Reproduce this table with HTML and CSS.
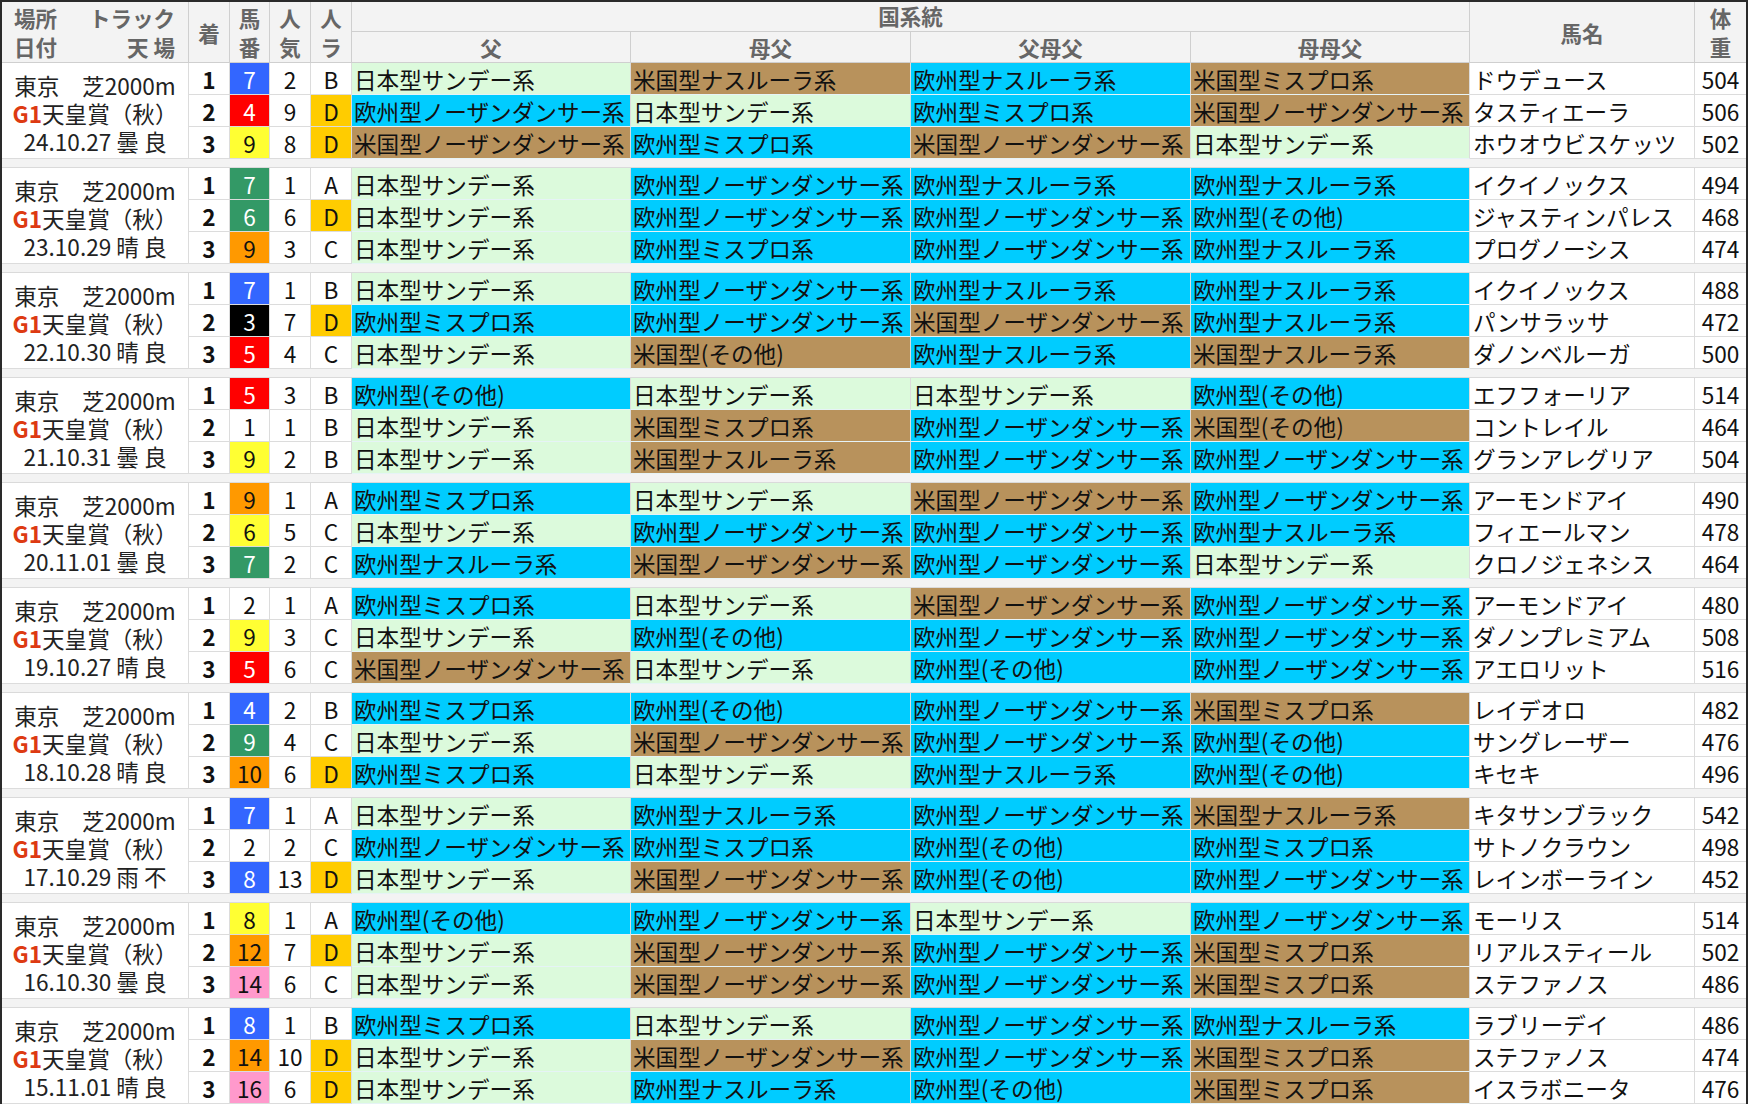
FILE: index.html
```html
<!DOCTYPE html>
<html lang="ja">
<head>
<meta charset="utf-8">
<title>天皇賞（秋） 国系統</title>
<link rel="stylesheet" href="styles.css">
</head>
<body>
<div class="tbl">
  <div class="head">
    <div class="h h-place"><div class="hl"><span>場所</span><span>トラック</span></div><div class="hl"><span>日付</span><span>天 場</span></div></div>
    <div class="h h-rk">着</div>
    <div class="h h-v h-no">馬<br>番</div>
    <div class="h h-v h-pop">人<br>気</div>
    <div class="h h-v h-rank">人<br>ラ</div>
    <div class="h h-kk">国系統</div>
    <div class="h h-sub h-s1">父</div>
    <div class="h h-sub h-s2">母父</div>
    <div class="h h-sub h-s3">父母父</div>
    <div class="h h-sub h-s4">母母父</div>
    <div class="h h-nm">馬名</div>
    <div class="h h-v h-wt">体<br>重</div>
  </div>

  <div class="grp">
    <div class="place"><div>東京　芝2000m</div><div><b class="g1">G1</b>天皇賞（秋）</div><div>24.10.27 曇 良</div></div>
    <div class="c rk">1</div><div class="c f4">7</div><div class="c">2</div><div class="c">B</div><div class="c p j">日本型サンデー系</div><div class="c p a">米国型ナスルーラ系</div><div class="c p e">欧州型ナスルーラ系</div><div class="c p a">米国型ミスプロ系</div><div class="c nm">ドウデュース</div><div class="c wt">504</div>
    <div class="c rk">2</div><div class="c f3">4</div><div class="c">9</div><div class="c d">D</div><div class="c p e">欧州型ノーザンダンサー系</div><div class="c p j">日本型サンデー系</div><div class="c p e">欧州型ミスプロ系</div><div class="c p a">米国型ノーザンダンサー系</div><div class="c nm">タスティエーラ</div><div class="c wt">506</div>
    <div class="c rk">3</div><div class="c f5">9</div><div class="c">8</div><div class="c d">D</div><div class="c p a">米国型ノーザンダンサー系</div><div class="c p e">欧州型ミスプロ系</div><div class="c p a">米国型ノーザンダンサー系</div><div class="c p j">日本型サンデー系</div><div class="c nm">ホウオウビスケッツ</div><div class="c wt">502</div>
  </div>
  <div class="sep"></div>

  <div class="grp">
    <div class="place"><div>東京　芝2000m</div><div><b class="g1">G1</b>天皇賞（秋）</div><div>23.10.29 晴 良</div></div>
    <div class="c rk">1</div><div class="c f6">7</div><div class="c">1</div><div class="c">A</div><div class="c p j">日本型サンデー系</div><div class="c p e">欧州型ノーザンダンサー系</div><div class="c p e">欧州型ナスルーラ系</div><div class="c p e">欧州型ナスルーラ系</div><div class="c nm">イクイノックス</div><div class="c wt">494</div>
    <div class="c rk">2</div><div class="c f6">6</div><div class="c">6</div><div class="c d">D</div><div class="c p j">日本型サンデー系</div><div class="c p e">欧州型ノーザンダンサー系</div><div class="c p e">欧州型ノーザンダンサー系</div><div class="c p e">欧州型(その他)</div><div class="c nm">ジャスティンパレス</div><div class="c wt">468</div>
    <div class="c rk">3</div><div class="c f7">9</div><div class="c">3</div><div class="c">C</div><div class="c p j">日本型サンデー系</div><div class="c p e">欧州型ミスプロ系</div><div class="c p e">欧州型ノーザンダンサー系</div><div class="c p e">欧州型ナスルーラ系</div><div class="c nm">プログノーシス</div><div class="c wt">474</div>
  </div>
  <div class="sep"></div>

  <div class="grp">
    <div class="place"><div>東京　芝2000m</div><div><b class="g1">G1</b>天皇賞（秋）</div><div>22.10.30 晴 良</div></div>
    <div class="c rk">1</div><div class="c f4">7</div><div class="c">1</div><div class="c">B</div><div class="c p j">日本型サンデー系</div><div class="c p e">欧州型ノーザンダンサー系</div><div class="c p e">欧州型ナスルーラ系</div><div class="c p e">欧州型ナスルーラ系</div><div class="c nm">イクイノックス</div><div class="c wt">488</div>
    <div class="c rk">2</div><div class="c f2">3</div><div class="c">7</div><div class="c d">D</div><div class="c p e">欧州型ミスプロ系</div><div class="c p e">欧州型ノーザンダンサー系</div><div class="c p a">米国型ノーザンダンサー系</div><div class="c p e">欧州型ナスルーラ系</div><div class="c nm">パンサラッサ</div><div class="c wt">472</div>
    <div class="c rk">3</div><div class="c f3">5</div><div class="c">4</div><div class="c">C</div><div class="c p j">日本型サンデー系</div><div class="c p a">米国型(その他)</div><div class="c p e">欧州型ナスルーラ系</div><div class="c p a">米国型ナスルーラ系</div><div class="c nm">ダノンベルーガ</div><div class="c wt">500</div>
  </div>
  <div class="sep"></div>

  <div class="grp">
    <div class="place"><div>東京　芝2000m</div><div><b class="g1">G1</b>天皇賞（秋）</div><div>21.10.31 曇 良</div></div>
    <div class="c rk">1</div><div class="c f3">5</div><div class="c">3</div><div class="c">B</div><div class="c p e">欧州型(その他)</div><div class="c p j">日本型サンデー系</div><div class="c p j">日本型サンデー系</div><div class="c p e">欧州型(その他)</div><div class="c nm">エフフォーリア</div><div class="c wt">514</div>
    <div class="c rk">2</div><div class="c f1">1</div><div class="c">1</div><div class="c">B</div><div class="c p j">日本型サンデー系</div><div class="c p a">米国型ミスプロ系</div><div class="c p e">欧州型ノーザンダンサー系</div><div class="c p a">米国型(その他)</div><div class="c nm">コントレイル</div><div class="c wt">464</div>
    <div class="c rk">3</div><div class="c f5">9</div><div class="c">2</div><div class="c">B</div><div class="c p j">日本型サンデー系</div><div class="c p a">米国型ナスルーラ系</div><div class="c p e">欧州型ノーザンダンサー系</div><div class="c p e">欧州型ノーザンダンサー系</div><div class="c nm">グランアレグリア</div><div class="c wt">504</div>
  </div>
  <div class="sep"></div>

  <div class="grp">
    <div class="place"><div>東京　芝2000m</div><div><b class="g1">G1</b>天皇賞（秋）</div><div>20.11.01 曇 良</div></div>
    <div class="c rk">1</div><div class="c f7">9</div><div class="c">1</div><div class="c">A</div><div class="c p e">欧州型ミスプロ系</div><div class="c p j">日本型サンデー系</div><div class="c p a">米国型ノーザンダンサー系</div><div class="c p e">欧州型ノーザンダンサー系</div><div class="c nm">アーモンドアイ</div><div class="c wt">490</div>
    <div class="c rk">2</div><div class="c f5">6</div><div class="c">5</div><div class="c">C</div><div class="c p j">日本型サンデー系</div><div class="c p e">欧州型ノーザンダンサー系</div><div class="c p e">欧州型ノーザンダンサー系</div><div class="c p e">欧州型ナスルーラ系</div><div class="c nm">フィエールマン</div><div class="c wt">478</div>
    <div class="c rk">3</div><div class="c f6">7</div><div class="c">2</div><div class="c">C</div><div class="c p e">欧州型ナスルーラ系</div><div class="c p a">米国型ノーザンダンサー系</div><div class="c p e">欧州型ノーザンダンサー系</div><div class="c p j">日本型サンデー系</div><div class="c nm">クロノジェネシス</div><div class="c wt">464</div>
  </div>
  <div class="sep"></div>

  <div class="grp">
    <div class="place"><div>東京　芝2000m</div><div><b class="g1">G1</b>天皇賞（秋）</div><div>19.10.27 晴 良</div></div>
    <div class="c rk">1</div><div class="c f1">2</div><div class="c">1</div><div class="c">A</div><div class="c p e">欧州型ミスプロ系</div><div class="c p j">日本型サンデー系</div><div class="c p a">米国型ノーザンダンサー系</div><div class="c p e">欧州型ノーザンダンサー系</div><div class="c nm">アーモンドアイ</div><div class="c wt">480</div>
    <div class="c rk">2</div><div class="c f5">9</div><div class="c">3</div><div class="c">C</div><div class="c p j">日本型サンデー系</div><div class="c p e">欧州型(その他)</div><div class="c p e">欧州型ノーザンダンサー系</div><div class="c p e">欧州型ノーザンダンサー系</div><div class="c nm">ダノンプレミアム</div><div class="c wt">508</div>
    <div class="c rk">3</div><div class="c f3">5</div><div class="c">6</div><div class="c">C</div><div class="c p a">米国型ノーザンダンサー系</div><div class="c p j">日本型サンデー系</div><div class="c p e">欧州型(その他)</div><div class="c p e">欧州型ノーザンダンサー系</div><div class="c nm">アエロリット</div><div class="c wt">516</div>
  </div>
  <div class="sep"></div>

  <div class="grp">
    <div class="place"><div>東京　芝2000m</div><div><b class="g1">G1</b>天皇賞（秋）</div><div>18.10.28 晴 良</div></div>
    <div class="c rk">1</div><div class="c f4">4</div><div class="c">2</div><div class="c">B</div><div class="c p e">欧州型ミスプロ系</div><div class="c p e">欧州型(その他)</div><div class="c p e">欧州型ノーザンダンサー系</div><div class="c p a">米国型ミスプロ系</div><div class="c nm">レイデオロ</div><div class="c wt">482</div>
    <div class="c rk">2</div><div class="c f6">9</div><div class="c">4</div><div class="c">C</div><div class="c p j">日本型サンデー系</div><div class="c p a">米国型ノーザンダンサー系</div><div class="c p e">欧州型ノーザンダンサー系</div><div class="c p e">欧州型(その他)</div><div class="c nm">サングレーザー</div><div class="c wt">476</div>
    <div class="c rk">3</div><div class="c f7">10</div><div class="c">6</div><div class="c d">D</div><div class="c p e">欧州型ミスプロ系</div><div class="c p j">日本型サンデー系</div><div class="c p e">欧州型ナスルーラ系</div><div class="c p e">欧州型(その他)</div><div class="c nm">キセキ</div><div class="c wt">496</div>
  </div>
  <div class="sep"></div>

  <div class="grp">
    <div class="place"><div>東京　芝2000m</div><div><b class="g1">G1</b>天皇賞（秋）</div><div>17.10.29 雨 不</div></div>
    <div class="c rk">1</div><div class="c f4">7</div><div class="c">1</div><div class="c">A</div><div class="c p j">日本型サンデー系</div><div class="c p e">欧州型ナスルーラ系</div><div class="c p e">欧州型ノーザンダンサー系</div><div class="c p a">米国型ナスルーラ系</div><div class="c nm">キタサンブラック</div><div class="c wt">542</div>
    <div class="c rk">2</div><div class="c f1">2</div><div class="c">2</div><div class="c">C</div><div class="c p e">欧州型ノーザンダンサー系</div><div class="c p e">欧州型ミスプロ系</div><div class="c p e">欧州型(その他)</div><div class="c p e">欧州型ミスプロ系</div><div class="c nm">サトノクラウン</div><div class="c wt">498</div>
    <div class="c rk">3</div><div class="c f4">8</div><div class="c">13</div><div class="c d">D</div><div class="c p j">日本型サンデー系</div><div class="c p a">米国型ノーザンダンサー系</div><div class="c p e">欧州型(その他)</div><div class="c p e">欧州型ノーザンダンサー系</div><div class="c nm">レインボーライン</div><div class="c wt">452</div>
  </div>
  <div class="sep"></div>

  <div class="grp">
    <div class="place"><div>東京　芝2000m</div><div><b class="g1">G1</b>天皇賞（秋）</div><div>16.10.30 曇 良</div></div>
    <div class="c rk">1</div><div class="c f5">8</div><div class="c">1</div><div class="c">A</div><div class="c p e">欧州型(その他)</div><div class="c p e">欧州型ノーザンダンサー系</div><div class="c p j">日本型サンデー系</div><div class="c p e">欧州型ノーザンダンサー系</div><div class="c nm">モーリス</div><div class="c wt">514</div>
    <div class="c rk">2</div><div class="c f7">12</div><div class="c">7</div><div class="c d">D</div><div class="c p j">日本型サンデー系</div><div class="c p a">米国型ノーザンダンサー系</div><div class="c p e">欧州型ノーザンダンサー系</div><div class="c p a">米国型ミスプロ系</div><div class="c nm">リアルスティール</div><div class="c wt">502</div>
    <div class="c rk">3</div><div class="c f8">14</div><div class="c">6</div><div class="c">C</div><div class="c p j">日本型サンデー系</div><div class="c p a">米国型ノーザンダンサー系</div><div class="c p e">欧州型ノーザンダンサー系</div><div class="c p a">米国型ミスプロ系</div><div class="c nm">ステファノス</div><div class="c wt">486</div>
  </div>
  <div class="sep"></div>

  <div class="grp">
    <div class="place"><div>東京　芝2000m</div><div><b class="g1">G1</b>天皇賞（秋）</div><div>15.11.01 晴 良</div></div>
    <div class="c rk">1</div><div class="c f4">8</div><div class="c">1</div><div class="c">B</div><div class="c p e">欧州型ミスプロ系</div><div class="c p j">日本型サンデー系</div><div class="c p e">欧州型ノーザンダンサー系</div><div class="c p e">欧州型ナスルーラ系</div><div class="c nm">ラブリーデイ</div><div class="c wt">486</div>
    <div class="c rk">2</div><div class="c f7">14</div><div class="c">10</div><div class="c d">D</div><div class="c p j">日本型サンデー系</div><div class="c p a">米国型ノーザンダンサー系</div><div class="c p e">欧州型ノーザンダンサー系</div><div class="c p a">米国型ミスプロ系</div><div class="c nm">ステファノス</div><div class="c wt">474</div>
    <div class="c rk">3</div><div class="c f8">16</div><div class="c">6</div><div class="c d">D</div><div class="c p j">日本型サンデー系</div><div class="c p e">欧州型ナスルーラ系</div><div class="c p e">欧州型(その他)</div><div class="c p a">米国型ミスプロ系</div><div class="c nm">イスラボニータ</div><div class="c wt">476</div>
  </div>
</div>
</body>
</html>
```

FILE: styles.css
```css
html, body {
  margin: 0;
  padding: 0;
  overflow: hidden;
  background: #ffffff;
}

.tbl {
  width: 1748px;
  box-sizing: border-box;
  border: 2px solid #2a2a2a;
  border-bottom-width: 1px;
  font-family: "Noto Sans CJK JP", "Noto Sans", sans-serif;
  font-size: 22.6px;
  color: #111;
  background: #fff;
}

.head,
.grp {
  display: grid;
  grid-template-columns: 187px 41px 40px 41px 41px 279px 280px 280px 279px 225px 51px;
}

.head {
  grid-template-rows: 30px 31px;
  background: #f3f3f3;
}

.h {
  box-sizing: border-box;
  border-right: 1px solid #cfcfcf;
  border-bottom: 1px solid #cfcfcf;
  color: #666;
  font-weight: bold;
  font-size: 21.5px;
  display: flex;
  flex-direction: column;
  align-items: center;
  justify-content: center;
  text-align: center;
  line-height: 29px;
  white-space: nowrap;
}

.h-place {
  grid-column: 1;
  grid-row: 1 / 3;
  align-items: stretch;
  padding: 0 13px 0 12px;
}

.hl {
  display: flex;
  justify-content: space-between;
}

.h-rk { grid-column: 2; grid-row: 1 / 3; }
.h-no { grid-column: 3; grid-row: 1 / 3; }
.h-pop { grid-column: 4; grid-row: 1 / 3; }
.h-rank { grid-column: 5; grid-row: 1 / 3; }

.h-kk {
  grid-column: 6 / 10;
  grid-row: 1;
  padding-bottom: 2px;
}

.h-s1 { grid-column: 6; grid-row: 2; }
.h-s2 { grid-column: 7; grid-row: 2; }
.h-s3 { grid-column: 8; grid-row: 2; }
.h-s4 { grid-column: 9; grid-row: 2; }

.h-nm { grid-column: 10; grid-row: 1 / 3; }

.h-wt {
  grid-column: 11;
  grid-row: 1 / 3;
  border-right: none;
}

.grp {
  grid-template-rows: 32px 32px 32px;
}

.place {
  grid-row: span 3;
  box-sizing: border-box;
  border-right: 1px solid #dcdcdc;
  border-bottom: 1px solid #dcdcdc;
  display: flex;
  flex-direction: column;
  justify-content: center;
  align-items: center;
  line-height: 28px;
  padding-top: 6px;
  color: #222;
  white-space: nowrap;
}

.g1 {
  color: #dd3a12;
  font-weight: bold;
}

.c {
  box-sizing: border-box;
  border-right: 1px solid #dcdcdc;
  border-bottom: 1px solid #dcdcdc;
  display: flex;
  align-items: center;
  justify-content: center;
  line-height: 28px;
  padding-top: 3px;
  white-space: nowrap;
  overflow: hidden;
}

.rk {
  font-weight: bold;
}

.p {
  justify-content: flex-start;
  padding-left: 2px;
  border-bottom-color: #e6f3f6;
}

.nm {
  justify-content: flex-start;
  padding-left: 3px;
}

.wt {
  border-right: none;
}

.j { background: #dcfadc; }
.e { background: #00ccff; }
.a { background: #b8925c; }

.d { background: #ffcc00; }

.f1 { background: #ffffff; color: #111; }
.f2 { background: #000000; color: #fff; }
.f3 { background: #ff0000; color: #fff; }
.f4 { background: #3366ff; color: #fff; }
.f5 { background: #ffff33; color: #111; }
.f6 { background: #339966; color: #fff; }
.f7 { background: #ff9900; color: #111; }
.f8 { background: #ff99cc; color: #111; }

.sep {
  height: 9px;
  box-sizing: border-box;
  background: #f3f3f3;
  border-bottom: 1px solid #dadada;
}
```
